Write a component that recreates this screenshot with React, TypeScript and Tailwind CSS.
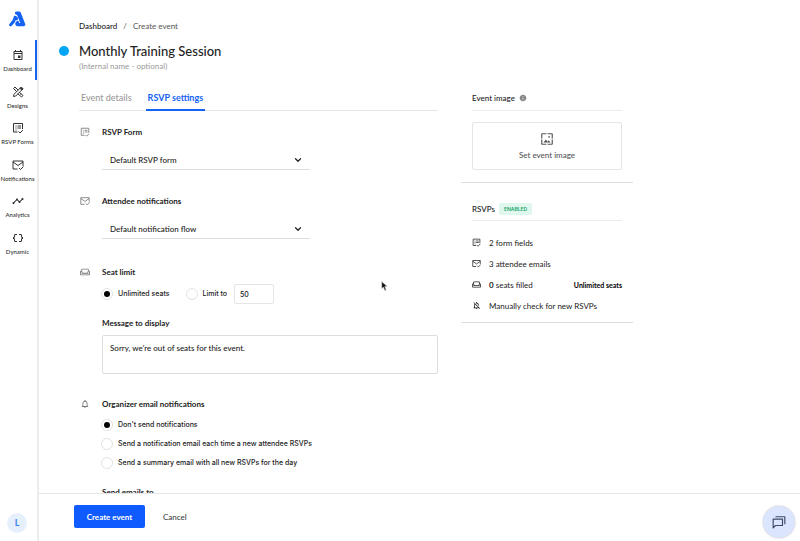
import React, { useState } from "react";
import {
  MdOutlineEvent,
  MdTimeline,
  MdDataObject,
  MdOutlineWeekend,
  MdNotificationsNone,
  MdOutlineNotificationsOff,
  MdWallpaper,
  MdInfo,
} from "react-icons/md";
import { LuChevronDown } from "react-icons/lu";

type IconProps = { className?: string };

const Logo: React.FC<IconProps> = ({ className }) => (
  <svg
    viewBox="0 0 48 46"
    className={className}
    fill="none"
    stroke="#1463f3"
    strokeLinecap="round"
    strokeLinejoin="round"
  >
    <path d="M21 6h8l13 33H25c-4 0-4-4-1-6" strokeWidth="9" />
    <path d="M26 8l12 30" strokeWidth="9" />
    <path d="M17 18c-1 9-5 15-13 22" strokeWidth="8" />
    <path d="M17 17c5 1 6 3 5 7" strokeWidth="6" />
  </svg>
);

const FormIcon: React.FC<IconProps> = ({ className }) => (
  <svg
    viewBox="0 0 24 24"
    className={className}
    fill="none"
    stroke="currentColor"
    strokeWidth="2"
  >
    <path d="M11 20H3V3h18v11" />
    <path d="M7 8h2M11 8h7M7 12h2M11 12h7M7 16h2" />
    <path d="M13 19l3 3 6-6" />
  </svg>
);

const MailCheckIcon: React.FC<IconProps> = ({ className }) => (
  <svg
    viewBox="0 0 24 24"
    className={className}
    fill="none"
    stroke="currentColor"
    strokeWidth="2"
  >
    <path d="M11 20H2V4h20v10" />
    <path d="M2 6l10 7 10-7" />
    <path d="M14 18l3 3 6-6" />
  </svg>
);

const DesignIcon: React.FC<IconProps> = ({ className }) => (
  <svg
    viewBox="0 0 24 24"
    className={className}
    fill="none"
    stroke="currentColor"
    strokeWidth="2"
    strokeLinejoin="round"
  >
    <path d="M9.500 11.500L3 5l3-3 6.500 6.500M14.500 12.500L22 19l-3 3-7.500-6.500" />
    <path d="M3 21l1-4.500L17 3.500l3.500 3.500L7.500 20z" />
    <path d="M16 4.500L18.500 2 22 5.500 19.500 8z" fill="currentColor" />
    <path d="M7 6.500L8.500 5M17 17l1.500-1.500" />
  </svg>
);

const ChatIcon: React.FC<IconProps> = ({ className }) => (
  <svg
    viewBox="0 0 24 24"
    className={className}
    fill="none"
    stroke="currentColor"
    strokeWidth="2"
    strokeLinejoin="round"
  >
    <path d="M2 7h16v11H6l-4 4z" />
    <path d="M6 3h16v13" />
  </svg>
);

const navItems = [
  { label: "Dashboard", icon: MdOutlineEvent },
  { label: "Designs", icon: DesignIcon },
  { label: "RSVP Forms", icon: FormIcon },
  { label: "Notifications", icon: MailCheckIcon },
  { label: "Analytics", icon: MdTimeline },
  { label: "Dynamic", icon: MdDataObject },
];

const organizerOptions = [
  "Don't send notifications",
  "Send a notification email each time a new attendee RSVPs",
  "Send a summary email with all new RSVPs for the day",
];

const radioClass =
  "grid size-3 shrink-0 appearance-none place-content-center rounded-full border border-[#e2e2e2] bg-white before:size-[6px] before:rounded-full checked:before:bg-black";

const Sidebar: React.FC = () => (
  <aside className="flex w-[39px] shrink-0 flex-col border-r-2 border-[#ececec]">
    <a href="#" aria-label="Home" className="mt-[11px] ml-[9px] block">
      <Logo className="h-4 w-[17px]" />
    </a>
    <nav className="mt-[13px] flex h-[223px] flex-col">
      {navItems.map(({ label, icon: Icon }, i) => (
        <a
          key={label}
          href="#"
          className={`flex flex-col items-center justify-end gap-1 pb-[7px] text-[6px] leading-[8px] font-medium whitespace-nowrap text-[#333] ${
            i === 0
              ? "h-10 shrink-0 border-r-2 border-[#1463f3]"
              : "flex-1 pr-[2px]"
          }`}
        >
          <Icon className="size-3" />
          {label}
        </a>
      ))}
    </nav>
    <button className="mt-auto mb-2 ml-[7px] size-5 rounded-full bg-[#e6f0fd] text-[9px] font-bold text-[#3b7df0]">
      L
    </button>
  </aside>
);

const SectionTitle: React.FC<{
  icon: React.FC<IconProps>;
  children: React.ReactNode;
}> = ({ icon: Icon, children }) => (
  <div className="flex h-3 items-center">
    <Icon className="mr-3 ml-px size-[10px] text-[#777]" />
    <h2 className="font-bold">{children}</h2>
  </div>
);

const SelectBox: React.FC<{ label: string; option: string }> = ({
  label,
  option,
}) => (
  <div className="grid h-5 w-[208px] items-center border-b border-[#dedede]">
    <select
      aria-label={label}
      className="col-start-1 row-start-1 h-full appearance-none bg-transparent px-2 font-medium"
    >
      <option>{option}</option>
    </select>
    <LuChevronDown className="pointer-events-none col-start-1 row-start-1 mr-[7px] size-[10px] justify-self-end stroke-3" />
  </div>
);

const RsvpSettings: React.FC = () => {
  const [limit, setLimit] = useState("unlimited");
  const [notify, setNotify] = useState(0);

  return (
    <div className="flex flex-col pt-[15px]">
      <SectionTitle icon={FormIcon}>RSVP Form</SectionTitle>
      <div className="mt-3 pl-[23px]">
        <SelectBox label="RSVP Form" option="Default RSVP form" />
      </div>

      <div className="mt-[25px]">
        <SectionTitle icon={MailCheckIcon}>Attendee notifications</SectionTitle>
      </div>
      <div className="mt-3 pl-[23px]">
        <SelectBox
          label="Attendee notifications"
          option="Default notification flow"
        />
      </div>

      <div className="mt-[27px]">
        <SectionTitle icon={MdOutlineWeekend}>Seat limit</SectionTitle>
      </div>
      <div className="mt-[6px] flex h-5 items-center pl-[22px] font-['Inter','Liberation_Sans',sans-serif] text-[7px] font-medium">
        <label className="flex items-center gap-[5px]">
          <input
            type="radio"
            name="limit"
            className={radioClass}
            checked={limit === "unlimited"}
            onChange={() => setLimit("unlimited")}
          />
          Unlimited seats
        </label>
        <label className="ml-4 flex items-center gap-[5px]">
          <input
            type="radio"
            name="limit"
            className={radioClass}
            checked={limit === "limited"}
            onChange={() => setLimit("limited")}
          />
          Limit to
        </label>
        <input
          aria-label="Seats"
          defaultValue="50"
          className="ml-[7px] h-5 w-10 rounded-[2px] border border-[#e5e5e5] px-[5px]"
        />
      </div>
      <div className="mt-[14px] flex flex-col pl-[23px]">
        <label htmlFor="message" className="font-bold">
          Message to display
        </label>
        <textarea
          id="message"
          className="mt-[7px] h-[39px] resize-none rounded-[2px] border border-[#dedede] px-[7px] py-[7px] leading-[10px] font-medium"
          defaultValue="Sorry, we're out of seats for this event."
        />
      </div>

      <div className="mt-6">
        <SectionTitle icon={MdNotificationsNone}>
          Organizer email notifications
        </SectionTitle>
      </div>
      <div className="mt-[9px] flex flex-col gap-[7px] pl-[22px] font-['Inter','Liberation_Sans',sans-serif] text-[7px] font-medium">
        {organizerOptions.map((option, i) => (
          <label key={option} className="flex h-3 items-center gap-[5px]">
            <input
              type="radio"
              name="notify"
              className={radioClass}
              checked={notify === i}
              onChange={() => setNotify(i)}
            />
            {option}
          </label>
        ))}
      </div>
      <h3 className="mt-[18px] pl-[23px] font-bold">Send emails to</h3>
    </div>
  );
};

const EventSummary: React.FC = () => (
  <aside className="w-[172px] shrink-0">
    <section className="border-b border-[#dedede] px-[11px] pb-3">
      <h2 className="flex h-[18px] items-start gap-1 border-b border-[#ececec] font-medium">
        Event image <MdInfo className="mt-px size-2 text-[#888]" />
      </h2>
      <button className="mt-[11px] flex h-12 w-full flex-col items-center justify-center gap-1 rounded-[2px] border border-[#e5e5e5] font-medium text-[#555]">
        <MdWallpaper className="size-[14px]" />
        Set event image
      </button>
    </section>
    <section className="border-b border-[#dedede] px-[11px] pt-5 pb-[6px]">
      <h2 className="flex h-[18px] items-center gap-1 border-b border-[#ececec] pb-[6px] font-medium">
        RSVPs
        <span className="rounded-[2px] bg-[#dff7ec] px-[5px] py-px font-['Inter','Liberation_Sans',sans-serif] text-[5px] font-semibold text-[#23a56d]">
          ENABLED
        </span>
      </h2>
      <ul className="mt-[11px] flex flex-col">
        <li className="flex h-[21px] items-center gap-2">
          <FormIcon className="size-[9px]" />2 form fields
        </li>
        <li className="flex h-[21px] items-center gap-2">
          <MailCheckIcon className="size-[9px]" />3 attendee emails
        </li>
        <li className="flex h-[21px] items-center gap-2">
          <MdOutlineWeekend className="size-[9px]" />
          <span>
            <b>0</b> seats filled
          </span>
          <b className="ml-auto text-[7px] text-black">Unlimited seats</b>
        </li>
        <li className="flex h-[21px] items-center gap-2">
          <MdOutlineNotificationsOff className="size-[9px]" />
          Manually check for new RSVPs
        </li>
      </ul>
    </section>
  </aside>
);

const App: React.FC = () => {
  const [activeTab, setActiveTab] = useState("RSVP settings");

  return (
    <div className="flex h-screen bg-white font-['Lato','Liberation_Sans',sans-serif] text-[8px] leading-[10px] text-[#222]">
      <Sidebar />
      <div className="flex min-w-0 flex-1 flex-col">
        <main className="min-h-0 flex-1 overflow-hidden pt-[21px] pl-5">
          <div className="pl-5 text-[#555]">
            <a href="#" className="font-medium text-[#222]">
              Dashboard
            </a>
            <span className="px-1"> / </span>
            Create event
          </div>
          <div className="mt-3 flex items-center gap-[10px]">
            <span className="size-[10px] rounded-full bg-[#03a5f4]" />
            <h1 className="text-[13px] leading-4 font-medium">
              Monthly Training Session
            </h1>
          </div>
          <p className="mt-[2px] pl-5 text-[#999]">
            (Internal name - optional)
          </p>

          <div className="mt-[22px] flex gap-[23px] pl-5">
            <div className="max-w-[359px] min-w-0 flex-1">
              <div className="flex h-[18px] gap-3 border-b border-[#e5e5e5]">
                {["Event details", "RSVP settings"].map((tab) => (
                  <button
                    key={tab}
                    onClick={() => setActiveTab(tab)}
                    className={`flex h-[18px] items-start border-b-2 px-[2px] text-[9px] leading-[10px] ${
                      activeTab === tab
                        ? "border-[#1463f3] font-bold text-[#1463f3]"
                        : "border-transparent font-medium text-[#999]"
                    }`}
                  >
                    {tab}
                  </button>
                ))}
              </div>
              <RsvpSettings />
            </div>
            <EventSummary />
          </div>
        </main>
        <footer className="flex h-12 shrink-0 items-center gap-[18px] border-t border-[#e5e5e5] pb-[2px] pl-[35px]">
          <button className="h-[23px] w-[71px] rounded-[2px] bg-[#0f5bff] font-bold text-white">
            Create event
          </button>
          <button className="font-medium text-[#444]">Cancel</button>
        </footer>
      </div>
      <button
        aria-label="Open chat"
        className="fixed right-[5px] bottom-[3px] flex size-8 items-center justify-center rounded-full bg-[#dbe5fd] text-[#3f4a66] shadow-[0_0_2px_#bbb]"
      >
        <ChatIcon className="size-[14px]" />
      </button>
      {/* Mouse pointer */}
      <svg
        viewBox="0 0 12 18"
        className="pointer-events-none fixed top-[281px] left-[381px] h-[10px] w-[7px]"
      >
        <path
          d="M1 1v13l3-3 2.500 6 2.500-1-2.500-6H11z"
          fill="#111"
          stroke="#ddd"
        />
      </svg>
    </div>
  );
};

export default App;
